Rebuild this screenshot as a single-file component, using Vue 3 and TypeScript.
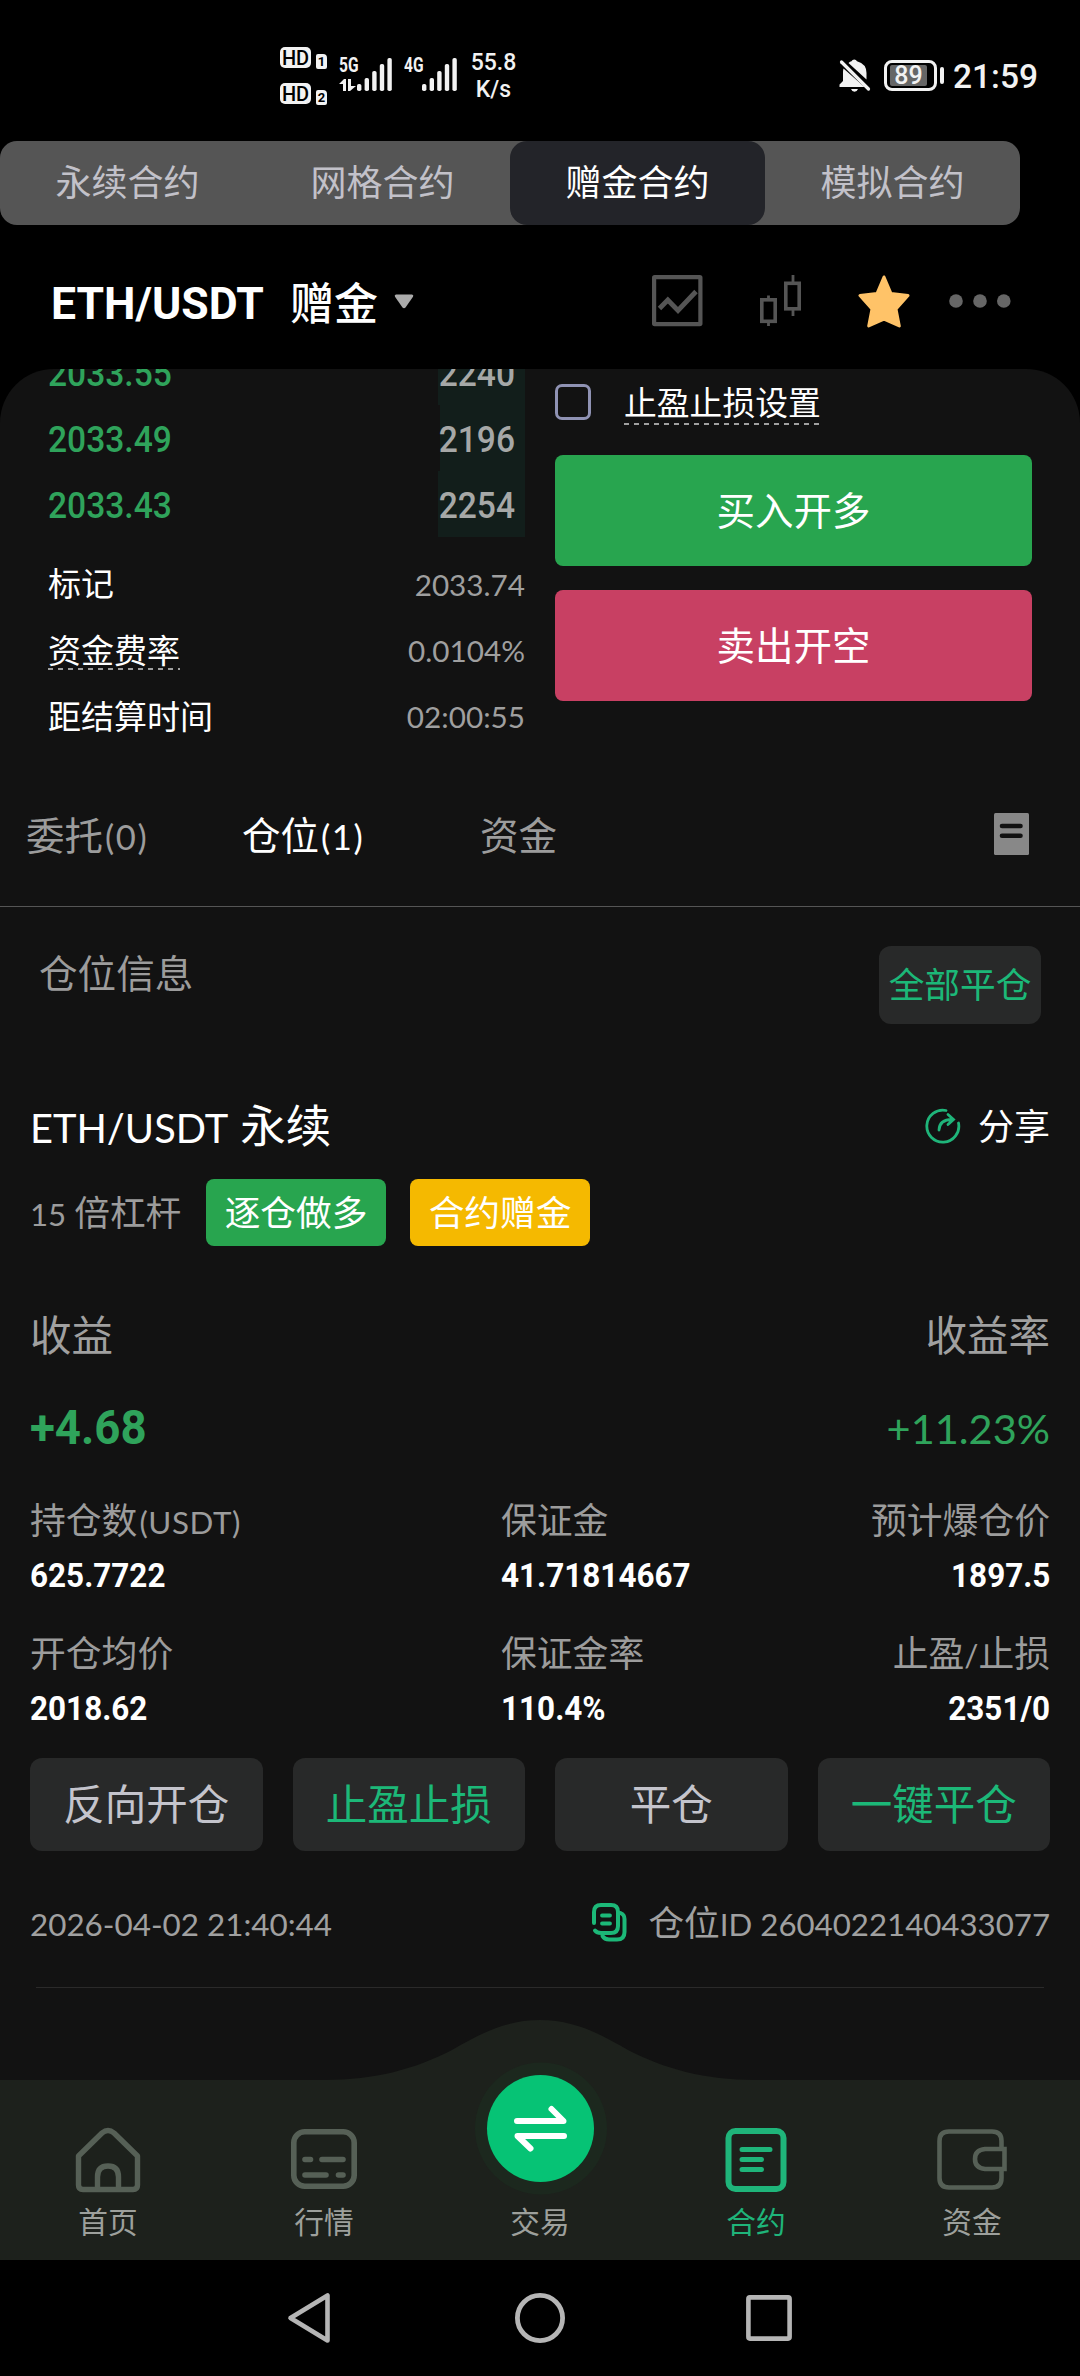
<script setup lang="ts">
interface BookRow { price: string; qty: string; depth: number }
interface Cell { label: string; latin?: string; tail?: string; value: string }

const modes: string[] = ['永续合约', '网格合约', '赠金合约', '模拟合约']
const activeMode = 2

const book: BookRow[] = [
  { price: '2033.55', qty: '2240', depth: 87 },
  { price: '2033.49', qty: '2196', depth: 85 },
  { price: '2033.43', qty: '2254', depth: 87 },
]

const info = [
  { label: '标记', value: '2033.74', hint: false },
  { label: '资金费率', value: '0.0104%', hint: true },
  { label: '距结算时间', value: '02:00:55', hint: false },
]

const cells: Cell[] = [
  { label: '持仓数', latin: '(USDT)', value: '625.7722' },
  { label: '保证金', value: '41.71814667' },
  { label: '预计爆仓价', value: '1897.5' },
  { label: '开仓均价', value: '2018.62' },
  { label: '保证金率', value: '110.4%' },
  { label: '止盈', latin: '/', tail: '止损', value: '2351/0' },
]

const actions = [
  { label: '反向开仓', green: false },
  { label: '止盈止损', green: true },
  { label: '平仓', green: false },
  { label: '一键平仓', green: true },
]

const bars = [7, 13, 20, 27, 33]
</script>

<template>
  <div class="screen">
    <header class="status">
      <div class="hd-col">
        <div v-for="n in 2" :key="n" class="hd-row">
          <span class="hd">HD</span>
          <span class="sim">{{ n }}</span>
        </div>
      </div>
      <div class="net net5">
        <div class="net-side">
          <span class="gen">5G</span>
          <svg width="17" height="12" viewBox="0 0 17 12"><path d="M0 5 L5 0 H7 V12 H4 V5 Z M9 0 H12 V7 H17 L11 12 H9 Z" fill="#f2f2f2" /></svg>
        </div>
        <svg class="bars" width="35" height="33" viewBox="0 0 35 33">
          <rect v-for="(h, i) in bars" :key="i" :x="i * 7.6" :y="33 - h" width="4.4" :height="h" rx="1.8" fill="#f2f2f2" />
        </svg>
      </div>
      <div class="net net4">
        <div class="net-side"><span class="gen">4G</span></div>
        <svg class="bars" width="35" height="33" viewBox="0 0 35 33">
          <rect v-for="(h, i) in bars" :key="i" :x="i * 7.6" :y="33 - h" width="4.4" :height="h" rx="1.8" fill="#f2f2f2" />
        </svg>
      </div>
      <div class="speed"><span>55.8</span><span>K/s</span></div>
      <div class="status-right">
        <svg width="32" height="33" viewBox="0 0 32 33">
          <path d="M4.5 9.5 L25.5 28 H0.5 V25.5 L4 22 V13 Q4 11 4.5 9.5Z M9.5 4 Q11 2.6 12.5 2.3 A3 3 0 0 1 18 2.3 Q27.5 5 27.5 14 V20.5 Z M12 30 H19 Q18 32.7 15.5 32.7 Q13 32.7 12 30Z" fill="#f2f2f2" />
          <path d="M2.5 3 L29.5 30" stroke="#f2f2f2" stroke-width="3.2" stroke-linecap="round" />
        </svg>
        <div class="battery"><span>89</span></div>
        <i class="nub"></i>
        <span class="clock">21:59</span>
      </div>
    </header>

    <nav class="modes">
      <div v-for="(m, i) in modes" :key="m" class="mode" :class="{ on: i === activeMode }">{{ m }}</div>
    </nav>

    <section class="pair">
      <span class="pair-name">ETH/USDT</span>
      <span class="pair-kind">赠金</span>
      <svg class="caret" width="20" height="15" viewBox="0 0 20 15"><path d="M2 0.5 H18 Q20 1 19 2.7 L11.5 13.5 Q10 15 8.5 13.5 L1 2.7 Q0 1 2 0.5Z" fill="#ababab" /></svg>
      <div class="pair-icons">
        <svg width="51" height="52" viewBox="0 0 51 52" fill="none" stroke="#555" stroke-width="4.2">
          <rect x="2.1" y="2.1" width="46.3" height="47" rx="0.6" />
          <path d="M7.5 33.5 L15.8 25 L26 35.5 L44 16.5" stroke-width="4.8" />
        </svg>
        <svg class="candles" width="42" height="52" viewBox="0 0 42 52" fill="none" stroke="#555" stroke-width="3.6">
          <rect x="1.8" y="24.8" width="13.4" height="21.5" />
          <rect x="25.8" y="8.3" width="13.4" height="25.5" />
          <path d="M8.5 20.5 V24 M8.5 47 V51 M33 0 V8 M33 34 V41" stroke-width="2.8" />
        </svg>
        <svg class="star" width="52" height="53" viewBox="0 0 52 53">
          <path d="M26 2 L33 18.5 L50 20.5 L38 34 L41.3 51 L26 44.2 L10.7 51 L14 34 L2 20.5 L19 18.5 Z" fill="#ffc368" stroke="#ffc368" stroke-width="3" stroke-linejoin="round" />
        </svg>
        <svg class="dots" width="62" height="16" viewBox="0 0 62 16" fill="#666">
          <circle cx="7" cy="8" r="6.8" /><circle cx="31" cy="8" r="6.8" /><circle cx="54.8" cy="8" r="6.8" />
        </svg>
      </div>
    </section>

    <main class="panel">
      <section class="trade">
        <div class="book">
          <div v-for="r in book" :key="r.price" class="book-row">
            <span class="din price">{{ r.price }}</span>
            <span class="depth" :style="{ width: r.depth + 'px' }"><span class="din">{{ r.qty }}</span></span>
          </div>
          <div class="info">
            <div v-for="r in info" :key="r.label" class="info-row">
              <span class="info-label" :class="{ hint: r.hint }">{{ r.label }}</span>
              <span class="info-value">{{ r.value }}</span>
            </div>
          </div>
        </div>
        <div class="order">
          <div class="check-row">
            <i class="box"></i>
            <span class="check-label hint">止盈止损设置</span>
          </div>
          <div class="btn buy">买入开多</div>
          <div class="btn sell">卖出开空</div>
        </div>
      </section>

      <nav class="tabs">
        <span class="tab t1">委托<b class="lt">(0)</b></span>
        <span class="tab t2 on">仓位<b class="lt">(1)</b></span>
        <span class="tab t3">资金</span>
        <svg class="doc" width="35" height="42" viewBox="0 0 35 42">
          <rect width="35" height="42" rx="1.5" fill="#888" />
          <path d="M8 13 H26.5 M8 22.7 H26.5" stroke="#121212" stroke-width="4.6" stroke-linecap="round" />
        </svg>
      </nav>

      <div class="pos-head">
        <span class="pos-title">仓位信息</span>
        <span class="close-all">全部平仓</span>
      </div>

      <article class="card">
        <div class="row title-row">
          <span class="symbol"><b class="lt">ETH/USDT</b> 永续</span>
          <span class="share">
            <svg width="36" height="36" viewBox="0 0 36 36" fill="none" stroke="#1fb57a" stroke-width="2.8" stroke-linecap="round">
              <path d="M21 2.5 A16 16 0 1 0 33.500 15" />
              <path d="M14 22 Q14.500 11.500 27 11.500 M23 6.500 L28.500 11.500 L23 16.500" />
            </svg>
            <span>分享</span>
          </span>
        </div>
        <div class="tags">
          <span class="lever"><b class="lt">15</b> 倍杠杆</span>
          <span class="tag green">逐仓做多</span>
          <span class="tag gold">合约赠金</span>
        </div>
        <div class="row profit-label"><span>收益</span><span>收益率</span></div>
        <div class="row profit"><span class="gain">+4.68</span><span class="rate">+11.23%</span></div>
        <div class="grid">
          <div v-for="c in cells" :key="c.label + c.value" class="cell">
            <div class="cell-label">{{ c.label }}<b v-if="c.latin" class="lt">{{ c.latin }}</b>{{ c.tail }}</div>
            <div class="cell-value"><span>{{ c.value }}</span></div>
          </div>
        </div>
        <div class="actions">
          <span v-for="a in actions" :key="a.label" class="action" :class="{ green: a.green }">{{ a.label }}</span>
        </div>
        <div class="row meta">
          <span class="date">2026-04-02 21:40:44</span>
          <span class="pid">
            <svg width="35" height="39" viewBox="0 0 35 39" fill="none" stroke="#1cb878" stroke-width="4" stroke-linecap="round">
              <path d="M2 20 V9 Q2 2 9 2 H19 Q26 2 26 9 V23 Q26 30 19 30 H9 Q5 30 3 27.5" />
              <path d="M28.5 10 Q32.5 11.5 32.5 16 V29 Q32.5 36.5 25 36.5 H17 Q12.5 36.5 10.5 33" />
              <path d="M10 12.5 H18 M10 20.5 H18" stroke-width="3.8" />
            </svg>
            <span class="pid-text">仓位<b class="lt">ID 2604022140433077</b></span>
          </span>
        </div>
        <div class="divider"></div>
      </article>
    </main>

    <footer class="nav">
      <svg class="nav-bg" width="1080" height="240" viewBox="0 0 1080 240">
        <path d="M0 60 H325 C375 60 415 49 452 30 C480 14 505 0 540 0 C575 0 600 14 628 30 C665 49 705 60 755 60 H1080 V240 H0 Z" fill="#1d211c" />
        <circle cx="541" cy="108.5" r="66" fill="#1c281e" />
      </svg>
      <div class="nav-item">
        <svg width="66" height="66" viewBox="0 0 66 66" fill="none" stroke="#566056" stroke-width="5.4" stroke-linejoin="round">
          <path d="M3.5 29 L27 6 Q33 1 39 6 L62.5 29 V58 Q62.5 62.5 58 62.5 H8 Q3.5 62.5 3.5 58 Z" />
          <path d="M22.5 62 V50 Q22.5 39 33 39 Q43.5 39 43.5 50 V62" />
        </svg>
        <span>首页</span>
      </div>
      <div class="nav-item">
        <svg width="66" height="66" viewBox="0 0 66 66" fill="none" stroke="#566056" stroke-width="5.6" stroke-linecap="round">
          <rect x="2.8" y="4.8" width="60.4" height="54.4" rx="11" />
          <path d="M14 32.5 H19.5 M31 32.5 H52 M14 48 H35 M47.5 48 H52" />
        </svg>
        <span>行情</span>
      </div>
      <div class="nav-item">
        <div class="swap">
          <svg width="107" height="107" viewBox="0 0 107 107" fill="none" stroke="#fff" stroke-width="6" stroke-linecap="round" stroke-linejoin="round">
            <path d="M30 46 H76.5 L64.5 34" />
            <path d="M77 61 H30.5 L43.5 73.5" />
          </svg>
        </div>
        <span>交易</span>
      </div>
      <div class="nav-item on">
        <svg width="66" height="66" viewBox="0 0 66 66" fill="none" stroke="#1fb57a" stroke-width="6" stroke-linecap="round">
          <rect x="5.5" y="4" width="55" height="58" rx="7" />
          <path d="M19 22.5 H47 M19 32.5 H38.5 M19 42.5 H38.5" stroke-width="5" />
        </svg>
        <span>合约</span>
      </div>
      <div class="nav-item">
        <svg width="70" height="66" viewBox="0 0 70 66" fill="none" stroke="#566056" stroke-width="4.6">
          <path d="M64.5 20 V14 Q64.5 4.5 55 4.5 H12 Q2.5 4.5 2.5 14 V51 Q2.5 60.5 12 60.5 H55 Q64.5 60.5 64.5 51 V43" />
          <path d="M67.5 22 H48 Q38 23 38 32 Q38 41 48 42 H67.5 Z" />
        </svg>
        <span>资金</span>
      </div>
    </footer>

    <div class="sysnav">
      <svg width="44" height="52" viewBox="0 0 44 52"><path d="M40.5 3.5 V48.5 L3.5 26 Z" fill="none" stroke="#b5b5b5" stroke-width="4.6" stroke-linejoin="round" /></svg>
      <svg width="52" height="52" viewBox="0 0 52 52"><circle cx="26" cy="26" r="22.6" fill="none" stroke="#b5b5b5" stroke-width="4.8" /></svg>
      <svg width="46" height="46" viewBox="0 0 46 46"><rect x="2.4" y="2.4" width="41.2" height="41.2" rx="1.5" fill="none" stroke="#b5b5b5" stroke-width="4.6" /></svg>
    </div>
  </div>
</template>

<style>
html, body { background: #000; }
</style>

<style scoped>
.screen {
  width: 1080px; height: 2376px; overflow: hidden; background: #000; color: #fff;
  display: flex; flex-direction: column;
  font-family: "Noto Sans CJK SC", sans-serif; font-size: 36px; font-weight: 400; white-space: nowrap;
}
svg { display: block; flex: none; }
.lt { font-family: Lato, "Noto Sans CJK SC", sans-serif; font-weight: 400; font-size: 0.875em; line-height: 1; }

/* status bar */
.status { height: 141px; display: flex; align-items: flex-start; box-sizing: border-box; padding-left: 280px; font-family: Roboto, sans-serif; color: #f2f2f2; flex: none; }
.hd-col { padding-top: 47px; display: flex; flex-direction: column; gap: 15px; }
.hd-row { display: flex; align-items: flex-end; height: 21px; }
.hd { width: 31px; height: 21px; border-radius: 5px; background: #f2f2f2; color: #000; font-size: 20px; line-height: 22px; font-weight: 500; text-align: center; }
.sim { width: 11px; height: 15px; margin-left: 5px; background: #f2f2f2; color: #000; border-radius: 2px 4px 2px 2px; font-size: 13px; line-height: 15px; font-weight: 700; text-align: center; position: relative; top: 1px; }
.net { display: flex; padding-top: 58px; }
.net5 { margin-left: 12px; }
.net4 { margin-left: 12px; }
.net-side { width: 18px; display: flex; flex-direction: column; align-items: flex-start; }
.gen { font-size: 21px; line-height: 15px; height: 15px; font-weight: 700; transform: scaleX(0.74); transform-origin: left; margin-bottom: 6px; }
.speed { margin-left: 15px; width: 43px; display: flex; flex-direction: column; align-items: center; padding-top: 49px; font-size: 23px; line-height: 27px; font-weight: 500; }
.status-right { margin-left: auto; margin-right: 42px; padding-top: 59px; display: flex; align-items: flex-start; }
.battery { margin-left: 13px; margin-top: 1px; width: 53px; height: 31px; box-sizing: border-box; border: 3px solid #f2f2f2; border-radius: 8px; padding: 2px 7px 2px 3px; display: flex; }
.battery span { flex: 1; background: #666; border-radius: 2px; font-size: 25px; line-height: 22px; font-weight: 500; text-align: center; }
.nub { width: 4px; height: 17px; margin: 8px 0 0 3px; border-radius: 2px; background: #f2f2f2; }
.clock { margin-left: 9px; font-size: 33.5px; line-height: 35px; font-weight: 500; }

/* contract modes */
.modes { width: 1020px; height: 84px; flex: none; display: flex; background: #555; border-radius: 17px; overflow: hidden; }
.mode { flex: 1; text-align: center; line-height: 79px; color: #c2c1c9; }
.mode.on { background: #232429; color: #fff; border-radius: 17px; }

/* pair header */
.pair { height: 144px; flex: none; display: flex; align-items: center; padding-left: 51px; }
.pair-name { font-family: Roboto, sans-serif; font-weight: 700; font-size: 44.5px; line-height: 60px; width: 213px; position: relative; top: 7px; }
.pair-kind { font-size: 44px; font-weight: 500; margin-left: 26px; width: 90px; line-height: 60px; position: relative; top: 4px; }
.caret { margin-left: 14px; position: relative; top: 4px; }
.pair-icons { flex: 1; display: flex; align-items: center; padding-left: 238px; position: relative; top: 4px; }
.candles { margin-left: 57px; }
.star { margin-left: 56px; }
.dots { margin-left: 39px; }

/* panel */
.panel { height: 1711px; flex: none; background: #121212; border-radius: 54px 54px 0 0; overflow: hidden; }
.trade { display: flex; padding-left: 48px; height: 381px; }
.book { width: 477px; margin-top: -30px; }
.book-row { height: 66px; display: flex; justify-content: space-between; }
.din { font-family: Roboto, sans-serif; font-size: 36.5px; line-height: 70px; height: 66px; font-weight: 500; display: inline-block; transform: scaleX(0.92); transform-origin: left; }
.price { color: #2fa35b; }
.depth { background: #121e1b; color: #a6a8a7; text-align: right; padding-right: 10px; box-sizing: border-box; display: block; height: 66px; }
.depth .din { transform-origin: right; margin-left: -20px; }
.info { margin-top: 14px; }
.info-row { height: 66.4px; display: flex; justify-content: space-between; align-items: center; }
.info-label { font-size: 33px; line-height: 42px; height: 42px; position: relative; top: -2px; }
.info-value { font-family: Lato, sans-serif; font-size: 29.7px; color: #9f9f9f; }
.hint { background: repeating-linear-gradient(90deg, #a0a0a0 0 5px, transparent 5px 10px) left bottom / 100% 2px no-repeat; }
.order { margin-left: 30px; width: 477px; }
.check-row { height: 72px; padding-top: 14px; box-sizing: content-box; display: flex; align-items: flex-start; }
.box { width: 36px; height: 36px; box-sizing: border-box; border: 3px solid #8f92b3; border-radius: 7px; margin-top: 1px; }
.check-label { margin-left: 33px; font-size: 32.8px; line-height: 36px; height: 42px; }
.btn { height: 111px; border-radius: 8px; text-align: center; font-size: 38.5px; line-height: 106px; }
.buy { background: #28a54f; }
.sell { background: #c84063; margin-top: 24px; }

.tabs { height: 142px; margin-top: 14px; border-bottom: 1px solid #555; display: flex; align-items: center; padding: 0 51px 0 26px; font-size: 38.5px; color: #9c9c9c; }
.tab { line-height: 60px; position: relative; top: -2px; }
.tab .lt { font-size: 0.9em; letter-spacing: 1.6px; padding-left: 2px; }
.tab.on { color: #fff; }
.t1 { width: 216px; }
.t2 { width: 238px; }
.doc { margin-left: auto; position: relative; top: -1px; }

.pos-head { display: flex; justify-content: space-between; align-items: flex-start; padding: 39px 39px 0 39px; }
.pos-title { font-size: 38.6px; line-height: 50px; color: #9c9c9c; }
.close-all { width: 162px; height: 78px; border-radius: 12px; background: #282929; color: #1cb878; text-align: center; line-height: 73px; font-size: 35.7px; }

.card { padding: 0 30px; }
.row { display: flex; justify-content: space-between; align-items: center; height: 60px; }
.title-row { margin-top: 72px; }
.symbol { font-size: 45.5px; line-height: 56px; word-spacing: 2px; position: relative; top: -3px; }
.share { display: flex; align-items: center; gap: 17px; line-height: 56px; }
.share span { position: relative; top: -2px; }
.tags { display: flex; align-items: center; margin-top: 23px; height: 67px; }
.lever { width: 176px; font-size: 35.7px; color: #9c9c9c; line-height: 62px; position: relative; top: -2px; }
.tag { width: 180px; height: 67px; border-radius: 8px; text-align: center; line-height: 63px; font-size: 35.7px; }
.tag.green { background: #28a54f; }
.tag.gold { background: #f5b900; margin-left: 24px; }
.profit-label { margin-top: 60px; font-size: 41.5px; line-height: 56px; color: #a0a0a0; }
.profit-label span { position: relative; top: -3px; }
.profit { margin-top: 32px; color: #2fa35b; }
.gain { font-family: Roboto, sans-serif; font-weight: 700; font-size: 47.5px; line-height: 60px; transform: scaleX(0.96); transform-origin: left; }
.rate { font-family: Lato, sans-serif; font-size: 41.5px; line-height: 60px; }
.grid { margin-top: 37px; display: grid; grid-template-columns: 471px 310px 1fr; row-gap: 28px; }
.cell:nth-child(3n) { text-align: right; }
.cell-label { height: 50px; line-height: 46px; font-size: 35.8px; color: #9c9c9c; }
.cell:nth-child(1) .lt { letter-spacing: 0.6px; padding-left: 2px; }
.cell-value { height: 50px; margin-top: 5px; font-family: Roboto, sans-serif; font-weight: 700; font-size: 34px; line-height: 50px; }
.cell-value span { display: inline-block; transform: scaleX(0.925); transform-origin: left; }
.cell:nth-child(3n) .cell-value span { transform-origin: right; }
.actions { margin-top: 25px; display: flex; gap: 30px; }
.action { flex: 1; height: 93px; border-radius: 12px; background: #282929; color: #c4c4cc; font-size: 41.5px; line-height: 88px; text-align: center; }
.action.green { color: #1cb878; }
.meta { margin-top: 43px; color: #a0a0a0; font-size: 35.7px; }
.date { font-family: Lato, sans-serif; font-size: 31.4px; }
.pid { display: flex; align-items: center; gap: 21px; line-height: 56px; position: relative; top: -2px; }
.pid-text { position: relative; top: -1px; }
.divider { height: 1px; background: #2a2a2a; margin: 33px 6px 0; }

/* bottom navigation */
.nav { height: 240px; margin-top: -60px; flex: none; display: flex; position: relative; }
.nav-bg { position: absolute; left: 0; top: 0; }
.nav-item { width: 216px; display: flex; flex-direction: column; align-items: center; justify-content: flex-end; position: relative; font-size: 29.7px; line-height: 40px; color: #9da09c; padding-bottom: 19px; box-sizing: border-box; }
.nav-item svg { margin-bottom: 8px; }
.nav-item.on { color: #1fb57a; }
.swap { width: 107px; height: 107px; border-radius: 50%; background: #06c375; margin: 0 0 19px 1px; }
.nav-item .swap svg { margin: 0; }

.sysnav { height: 116px; flex: none; display: flex; align-items: center; padding-left: 287px; }
.sysnav svg:nth-child(2) { margin-left: 183px; }
.sysnav svg:nth-child(3) { margin-left: 180px; }
</style>
